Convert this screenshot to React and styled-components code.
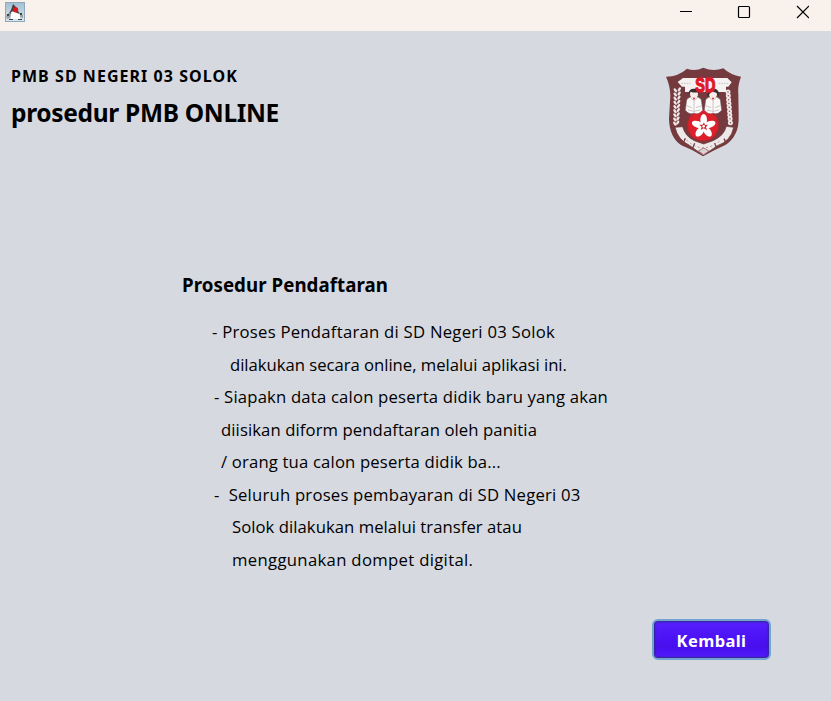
import React from 'react';
import styled, { createGlobalStyle } from 'styled-components';

const GlobalStyle = createGlobalStyle`
  * { box-sizing: border-box; }
  body { margin: 0; background: #d6d9e0; color: #000; font-family: 'Noto Sans', 'Open Sans', sans-serif; }
  h1, h2, h3, p, ul { margin: 0; padding: 0; }
`;

const Window = styled.div`
  display: flex;
  flex-direction: column;
  width: 831px;
  height: 701px;
  overflow: hidden;
  background: #d6d9e0;
`;

const TitleBar = styled.header`
  display: flex;
  justify-content: space-between;
  flex: none;
  height: 31px;
  padding-left: 5px;
  background: #f9f1ec;
`;

const AppIcon = styled.svg`
  width: 20px;
  height: 20px;
  margin-top: 2px;
`;

const WindowControls = styled.div`
  display: flex;
  height: 24px;
`;

const ControlButton = styled.button`
  display: grid;
  place-items: center;
  width: 58px;
  height: 24px;
  padding: 0;
  border: 0;
  background: transparent;
  svg { display: block; width: 14px; height: 14px; }
`;

const Banner = styled.section`
  display: flex;
  justify-content: space-between;
  flex: none;
  height: 241px;
  padding: 29px 81px 0 11px;
`;

const Titles = styled.div`
  display: flex;
  flex-direction: column;
  padding-top: 2px;
`;

const School = styled.h2`
  height: 28px;
  font-size: 16px;
  font-weight: 700;
  line-height: 28px;
  letter-spacing: 1.05px;
  white-space: pre;
`;

const PageTitle = styled.h1`
  font-size: 24.5px;
  font-weight: 700;
  line-height: 46px;
  letter-spacing: -0.32px;
  white-space: pre;
`;

const CrestImage = styled.svg`
  width: 90px;
  height: 104px;
`;

const Procedure = styled.main`
  flex: none;
  height: 347px;
  padding-left: 182px;
`;

const ProcedureTitle = styled.h3`
  height: 44px;
  font-size: 18.7px;
  font-weight: 700;
  line-height: 26px;
  letter-spacing: 0.06px;
  white-space: pre;
`;

const Lines = styled.ul`
  list-style: none;
`;

const Line = styled.li`
  height: 32.5px;
  padding-left: ${(p) => p.$indent}px;
  font-family: 'Open Sans', 'Noto Sans', sans-serif;
  font-size: 16.7px;
  line-height: 32.5px;
  letter-spacing: ${(p) => p.$spacing}px;
  white-space: pre;
`;

const Footer = styled.footer`
  display: flex;
  justify-content: flex-end;
  padding-right: 60px;
`;

const BackButton = styled.button`
  width: 119px;
  height: 41px;
  padding: 3px 0 0;
  border: 2px solid #73a4d1;
  border-radius: 6px;
  background: linear-gradient(#5620ff, #4a10f2 55%, #4810ed 72%, #521aff);
  box-shadow: inset 0 0 2px 1px #302a88;
  color: #fff;
  font: 700 16.5px/30px 'Noto Sans', sans-serif;
  letter-spacing: 0.4px;
`;

const lines = [
  { indent: 30, spacing: 0.25, text: '- Proses Pendaftaran di SD Negeri 03 Solok' },
  { indent: 48, spacing: -0.03, text: 'dilakukan secara online, melalui aplikasi ini.' },
  { indent: 32, spacing: 0.18, text: '- Siapakn data calon peserta didik baru yang akan' },
  { indent: 39, spacing: 0.09, text: 'diisikan diform pendaftaran oleh panitia' },
  { indent: 39, spacing: 0.16, text: '/ orang tua calon peserta didik ba...' },
  { indent: 32, spacing: 0.21, text: '-  Seluruh proses pembayaran di SD Negeri 03' },
  { indent: 50, spacing: 0.04, text: 'Solok dilakukan melalui transfer atau' },
  { indent: 50, spacing: 0.32, text: 'menggunakan dompet digital.' },
];

function JavaIcon() {
  return (
    <AppIcon viewBox="0 0 20 20" aria-label="Java">
      <defs>
        <linearGradient id="duke" x1="0" y1="0" x2="0" y2="1">
          <stop offset="0" stopColor="#a3bed2" />
          <stop offset="1" stopColor="#dce6ec" />
        </linearGradient>
      </defs>
      <rect x=".5" y=".5" width="19" height="19" fill="url(#duke)" stroke="#8ea9bd" />
      <path d="M7 9h6l2 4v4H6v-4Z" fill="#fbfbfa" />
      <path d="M8 2q4 3 5 7l2 3-3-1-3-2-3 1-1 4-2-1 3-5Z" fill="#3c4146" />
      <path d="m1 14 3-3 2 1-1 4-3 1Zm14-3 3 2v3l-3-1Z" fill="#9aa1a6" />
      <path d="M2 12h2v2H2ZM15 11h2v2h-2ZM4 17h4v1H4ZM13 17h4v1h-4Z" fill="#3c4146" />
      <circle cx="10.5" cy="7.7" r="2.7" fill="#d9171d" />
    </AppIcon>
  );
}

function Person({ x, hair }) {
  return (
    <g transform={`translate(${x} 84)`}>
      <path d="M-22 36q5-9 22-11 17 2 22 11l4 31q-13 15-26 8-13 7-26-8Z" fill="#faf9f8" stroke="#6f6060" strokeWidth="1.5" />
      <circle cx="0" cy="18" r="12" fill="#f8ece8" />
      <path d={hair} fill="#382f31" />
      <path d="m-9 30 9 8 9-8M0 38v34M-22 53l16 6m28-6L6 59M-18 66l17 4m19-4L1 70" fill="none" stroke="#b5aeae" strokeWidth="2" />
      <path d="m-4 29 4 7 4-7" fill="#d81f2b" />
    </g>
  );
}

function Crest() {
  const grains = [0, 1, 2, 3, 4, 5, 6, 7, 8];
  return (
    <CrestImage viewBox="0 0 270 312" aria-label="SD">
      <path d="M81 26q24 10 49-3 29 13 60 2 21 20 53 25-11 28-8 54l1 66q2 57-40 85-34 15-67 34-31-20-65-33-36-25-37-80l4-69Q30 75 18 50q38-1 63-24Z" fill="#753a3e" />
      <path d="M69 54h133l13 13-10 13h-7v16H75V80h-9L53 66Z" fill="#f5f3f2" />
      <path d="M64 70h28m84 0h29" stroke="#c5bfc0" strokeWidth="3" strokeDasharray="5 3" />
      <circle cx="129" cy="196" r="47" fill="#dc1f2b" stroke="#9f2b34" strokeWidth="5" strokeDasharray="4 3" />
      <g fill="#fff">
        {[0, 72, 144, 216, 288].map((angle) => (
          <ellipse key={angle} cx="131" cy="180" rx="10" ry="18" transform={`rotate(${angle} 131 199)`} />
        ))}
      </g>
      <path d="m132 187 3 8 9-1-6 7 3 9-10-5-9 5 3-9-7-7h10Z" fill="#d9222c" />
      <circle cx="131" cy="199" r="4" fill="#fff" />
      <Person x={102} hair="M-16 19Q-17 2 0 2q17 0 16 17l-6-6q-10 2-20-2Z" />
      <Person x={159} hair="M-17 25Q-19 2 0 1q21 2 18 26l-8-13q-10-1-13-5-4 8-8 9l-2 8Z" />
      <text x="136" y="95" textAnchor="middle" fontFamily="Liberation Sans, sans-serif" fontSize="60" fontWeight="700" textLength="60" lengthAdjust="spacingAndGlyphs" fill="#df1927" stroke="#df1927" strokeWidth="4">SD</text>
      {grains.map((i) => (
        <g key={i} fill="#eee8e7">
          <ellipse cx={46 - i * 0.2} cy={91 + i * 12.5} rx="3.7" ry="7" transform={`rotate(-38 ${46 - i * 0.2} ${91 + i * 12.5})`} />
          <ellipse cx={58 - i * 0.6} cy={88 + i * 12.5} rx="3.7" ry="7" transform={`rotate(34 ${58 - i * 0.6} ${88 + i * 12.5})`} />
          <circle cx={204 + i * 0.9} cy={96 + i * 11.5} r="7.5" />
          <circle cx={204 + i * 0.9} cy={96 + i * 11.5} r="2.2" fill="#8a5558" />
        </g>
      ))}
      <path d="M45 202q9 38 42 53l43 31 42-29q41-14 49-55l-22-3q-7 29-40 43l-28 10-28-10q-28-13-35-42Z" fill="#eee9e8" stroke="#67363a" strokeWidth="2" />
      <path d="m76 235-6 15m34 0-6 14m66-15 6 15m22-28 7 14" stroke="#743a3e" strokeWidth="4" />
      <path d="M80 240q49 47 103 0" fill="none" stroke="#a79698" strokeWidth="3" strokeDasharray="6 7" />
      <path d="m115 273 16-9 16 9-16 11Z" fill="#ddd1d1" stroke="#804b50" strokeWidth="2" />
    </CrestImage>
  );
}

export default function App() {
  return (
    <>
      <GlobalStyle />
      <Window>
        <TitleBar>
          <JavaIcon />
          <WindowControls>
            <ControlButton aria-label="Minimize">
              <svg viewBox="0 0 14 14"><path d="M1 6.5h12" stroke="#000" /></svg>
            </ControlButton>
            <ControlButton aria-label="Maximize">
              <svg viewBox="0 0 14 14"><rect x="1.5" y="1.5" width="11" height="11" rx="1" fill="none" stroke="#000" strokeWidth="1.2" /></svg>
            </ControlButton>
            <ControlButton aria-label="Close">
              <svg viewBox="0 0 14 14"><path d="m2 1 12 12M14 1 2 13" stroke="#000" strokeWidth="1.2" /></svg>
            </ControlButton>
          </WindowControls>
        </TitleBar>
        <Banner>
          <Titles>
            <School>PMB SD NEGERI 03 SOLOK</School>
            <PageTitle>prosedur PMB ONLINE</PageTitle>
          </Titles>
          <Crest />
        </Banner>
        <Procedure>
          <ProcedureTitle>Prosedur Pendaftaran</ProcedureTitle>
          <Lines>
            {lines.map((line) => (
              <Line key={line.text} $indent={line.indent} $spacing={line.spacing}>{line.text}</Line>
            ))}
          </Lines>
        </Procedure>
        <Footer>
          <BackButton>Kembali</BackButton>
        </Footer>
      </Window>
    </>
  );
}
